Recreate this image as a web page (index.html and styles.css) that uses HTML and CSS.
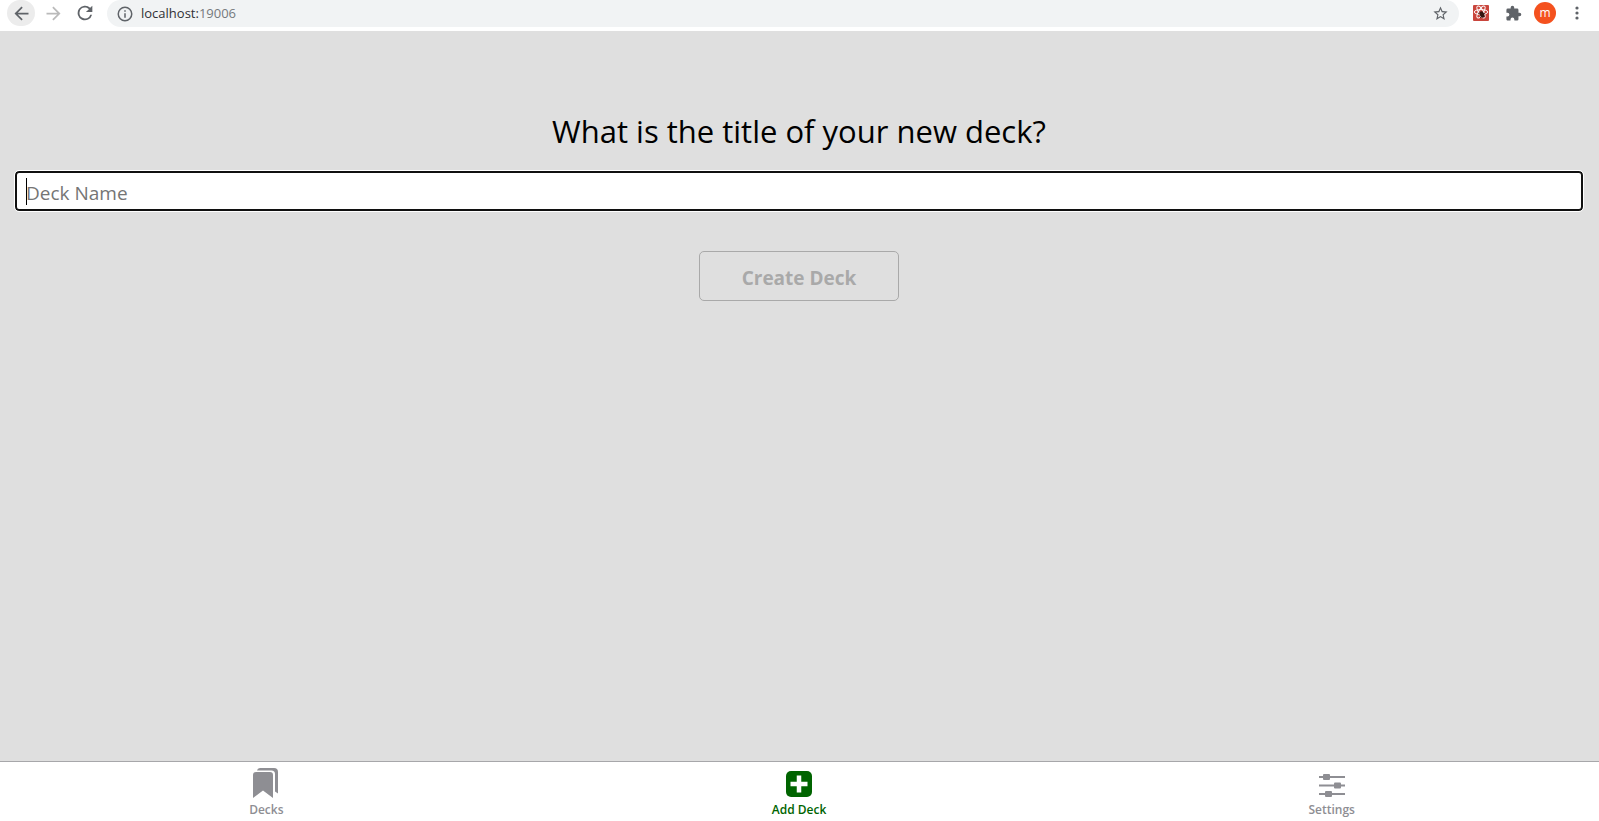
FILE: index.html
```html
<!DOCTYPE html>
<html lang="en">
<head>
<meta charset="utf-8">
<title>Add Deck</title>
<link rel="stylesheet" href="styles.css">
</head>
<body>
<header class="toolbar">
  <nav class="nav-buttons" aria-label="Browser">
    <button class="tool active" type="button" aria-label="Back"><svg width="21" height="21" viewBox="0 0 24 24"><path fill="currentColor" d="M20 11H7.8l5.600-5.600L12 4l-8 8 8 8 1.400-1.400L7.800 13H20z"/></svg></button>
    <button class="tool muted" type="button" aria-label="Forward"><svg width="21" height="21" viewBox="0 0 24 24"><path fill="currentColor" d="M4 11h12.200l-5.600-5.600L12 4l8 8-8 8-1.400-1.400 5.600-5.600H4z"/></svg></button>
    <button class="tool" type="button" aria-label="Reload"><svg width="22" height="22" viewBox="0 0 24 24"><path fill="currentColor" d="M17.650 6.350A8 8 0 1 0 19.730 14h-2.080A6 6 0 1 1 12 6c1.660 0 3.140.69 4.220 1.780L13 11h7V4z"/></svg></button>
  </nav>
  <div class="address">
    <svg class="info" width="18" height="18" viewBox="0 0 24 24"><path fill="currentColor" d="M11 7h2v2h-2zm0 4h2v6h-2zm1-9a10 10 0 1 0 0 20 10 10 0 0 0 0-20zm0 18a8 8 0 1 1 0-16 8 8 0 0 1 0 16z"/></svg>
    <span class="url">localhost:<span class="port">19006</span></span>
    <button class="star" type="button" aria-label="Bookmark"><svg width="17" height="17" viewBox="0 0 24 24"><path fill="currentColor" d="M22 9.240l-7.190-.62L12 2 9.190 8.630 2 9.240l5.460 4.730L5.820 21 12 17.270 18.180 21l-1.630-7.030zM12 15.400l-3.760 2.270 1-4.280-3.320-2.880 4.380-.38L12 6.100l1.710 4.040 4.380.38-3.320 2.880 1 4.280z"/></svg></button>
  </div>
  <div class="extensions">
    <button class="tool" type="button" aria-label="React tools"><svg width="16" height="16" viewBox="0 0 16 16"><rect width="16" height="16" rx="1" fill="#c9453c"/><g fill="none" stroke="#fff" stroke-width="1"><ellipse cx="8" cy="7" rx="6.800" ry="2.400"/><ellipse cx="8" cy="7" rx="6.800" ry="2.400" transform="rotate(60 8 7)"/><ellipse cx="8" cy="7" rx="6.800" ry="2.400" transform="rotate(120 8 7)"/></g><ellipse cx="9" cy="9.500" rx="2.200" ry="3.200" transform="rotate(-25 9 9.500)" fill="#351510"/><path d="M5 8l7 4M12 8l-5 5" stroke="#351510" stroke-width=".8"/></svg></button>
    <button class="tool" type="button" aria-label="Extensions"><svg width="17" height="17" viewBox="0 0 24 24"><path fill="currentColor" d="M20.500 11H19V7a2 2 0 0 0-2-2h-4V3.500a2.500 2.500 0 0 0-5 0V5H4a2 2 0 0 0-2 2v3.800h1.500a2.700 2.700 0 0 1 0 5.400H2V20c0 1.100.9 2 2 2h3.800v-1.500a2.700 2.700 0 0 1 5.400 0V22H17a2 2 0 0 0 2-2v-4h1.500a2.500 2.500 0 0 0 0-5z"/></svg></button>
    <button class="avatar" type="button" aria-label="Profile">m</button>
    <button class="tool" type="button" aria-label="Menu"><svg width="4" height="16" viewBox="0 0 4 16"><g fill="currentColor"><circle cx="2" cy="3" r="1.600"/><circle cx="2" cy="8" r="1.600"/><circle cx="2" cy="13" r="1.600"/></g></svg></button>
  </div>
</header>
<main class="screen">
  <form class="deck-form">
    <label class="question" for="deck-name">What is the title of your new deck?</label>
    <div class="field">
      <input class="deck-name" id="deck-name" type="text" placeholder="Deck Name">
      <span class="caret"></span>
    </div>
    <button class="create" type="submit" disabled>Create Deck</button>
  </form>
</main>
<nav class="tabs" aria-label="Main">
  <a class="tab" href="#decks">
    <svg width="30" height="32" viewBox="0 0 30 32"><path fill="currentColor" d="M2 8a3 3 0 0 1 3-3h14a3 3 0 0 1 3 3v23l-10-7.500L2 31z"/><path fill="currentColor" d="M6 3.500a3 3 0 0 1 3-2.500h14a4 4 0 0 1 4 4v21.500l-3-2V7a3.500 3.500 0 0 0-3.500-3.500z"/></svg>
    <span>Decks</span>
  </a>
  <a class="tab current" href="#add">
    <svg width="30" height="32" viewBox="0 0 30 32"><rect x="2" y="4" width="26" height="26" rx="5" fill="currentColor"/><path d="M15 8.500v17M6.500 17h17" stroke="#fff" stroke-width="4.500"/></svg>
    <span>Add Deck</span>
  </a>
  <a class="tab" href="#settings">
    <svg width="30" height="32" viewBox="0 0 30 32"><path d="M2 10h26M2 18.500h26M2 27h26" stroke="currentColor" stroke-width="2"/><g fill="currentColor"><rect x="6" y="7" width="7" height="6" rx="1"/><rect x="17" y="15.500" width="7" height="6" rx="1"/><rect x="8" y="24" width="7" height="6" rx="1"/></g></svg>
    <span>Settings</span>
  </a>
</nav>
</body>
</html>
```
FILE: styles.css
```css
* { box-sizing: border-box; }
body {
  margin: 0;
  min-height: 100vh;
  display: flex;
  flex-direction: column;
  background: #dfdfdf;
  font-family: "Open Sans", "Noto Sans", sans-serif;
}
button { padding: 0; border: 0; background: none; color: inherit; font-family: inherit; }
svg { display: block; }

.toolbar {
  display: flex;
  height: 31px;
  padding: 0 8px 5px 7px;
  background: #fff;
  color: #5f6368;
}
.nav-buttons { display: flex; gap: 4px; margin-right: 8px; }
.tool {
  display: flex;
  align-items: center;
  justify-content: center;
  width: 28px;
  height: 26px;
}
.active { border-radius: 14px; background: #ececec; }
.muted { color: #bababa; }
.address {
  flex: 1;
  display: flex;
  align-items: center;
  height: 27px;
  padding: 0 10px 0 9px;
  border-radius: 14px;
  background: #f1f3f4;
}
.url { flex: 1; margin-left: 7px; padding-bottom: 2px; font-size: 13px; line-height: 20px; color: #303134; }
.port { color: #75797d; }
.extensions { display: flex; align-items: center; gap: 4px; margin-left: 8px; }
.avatar {
  width: 22px;
  height: 22px;
  margin: 0 3px;
  border-radius: 50%;
  background: #f4511e;
  color: #fff;
  font-size: 12px;
  line-height: 20px;
}

.screen { flex: 1; padding: 76px 16px 0 15px; }
.deck-form { display: flex; flex-direction: column; align-items: center; }
.question { font-size: 31px; line-height: 48px; color: #000; text-align: center; }
.field { position: relative; width: 100%; margin-top: 16px; }
.deck-name {
  display: block;
  width: 100%;
  height: 40px;
  padding: 3px 9px 0;
  border: 2px solid #101010;
  border-radius: 4px;
  outline: 1px solid #fff;
  background: #fff;
  font-family: inherit;
  font-size: 19px;
}
.deck-name::placeholder { color: #757575; }
.caret { position: absolute; left: 11px; top: 7px; width: 1px; height: 27px; background: #000; }
.create {
  width: 200px;
  height: 50px;
  margin-top: 40px;
  padding-top: 3px;
  border: 1px solid #a9a9a9;
  border-radius: 5px;
  color: #a9a9a9;
  font-size: 19px;
  font-weight: 700;
}

.tabs { display: flex; height: 60px; padding-right: 1px; border-top: 1px solid #a7a7aa; background: #fff; }
.tab {
  flex: 1;
  display: flex;
  flex-direction: column;
  align-items: center;
  padding-top: 5px;
  color: #8e8e93;
  font-size: 12px;
  font-weight: 600;
  line-height: 22px;
  text-decoration: none;
}
.current { color: #006400; }
```
